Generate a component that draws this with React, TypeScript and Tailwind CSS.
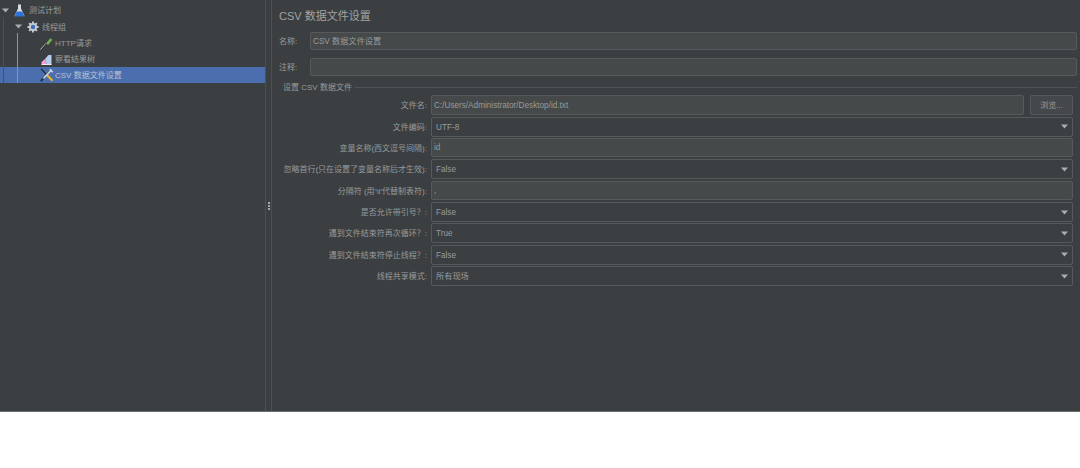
const FONT = "font-['Liberation_Sans','Noto_Sans_CJK_SC',sans-serif]";

function Caret({ className = '' }: { className?: string }) {
  return (
    <svg width="7" height="5" viewBox="0 0 7 5" className={className}>
      <path d="M0 0.5h7L3.5 4.5z" fill="#a9adb0" />
    </svg>
  );
}

function FlaskIcon() {
  return (
    <svg width="11" height="13" viewBox="0 0 11 13">
      <path d="M4 0.5h3v4l3.5 7.5H0.5L4 4.5z" fill="#d5dbe3" />
      <path d="M2.8 7.5h5.4l2.3 5H0.5z" fill="#2f73d8" />
    </svg>
  );
}

function GearIcon() {
  return (
    <svg width="12" height="12" viewBox="0 0 13 13">
      <g stroke="#c7ccd3" strokeWidth="2">
        <path d="M6.5 0.5v12M0.5 6.5h12M2.3 2.3l8.4 8.4M10.7 2.3l-8.4 8.4" />
      </g>
      <circle cx="6.5" cy="6.5" r="4.3" fill="#c7ccd3" />
      <circle cx="6.5" cy="6.5" r="2.4" fill="#3f6fb5" />
    </svg>
  );
}

function PipetteIcon() {
  return (
    <svg width="13" height="13" viewBox="0 0 13 13">
      <path d="M0.5 12.5L6 6.5" stroke="#cfd1d3" strokeWidth="1" />
      <path d="M1.5 12.5L7 6.5" stroke="#26292b" strokeWidth="1" />
      <path d="M6 6.5L10.2 1.2l2.3 1.6-4.4 5.2z" fill="#6fae55" />
    </svg>
  );
}

function ChartIcon() {
  return (
    <svg width="11" height="11" viewBox="0 0 11 11">
      <path d="M0.5 10.5V8L4 5l2 5.5z" fill="#f2a3dc" />
      <path d="M4 5l3.5-4L10.5 1v9.5H6z" fill="#b7cdf0" />
      <path d="M0.5 10.5h10" stroke="#f1e6f2" strokeWidth="1" />
    </svg>
  );
}

function ToolsIcon() {
  return (
    <svg width="14" height="14" viewBox="0 0 14 14">
      <path d="M1 0.8L6.5 6.5" stroke="#2a2d30" strokeWidth="1.3" />
      <path d="M6.5 6.5L12.5 12.8" stroke="#e3b32a" strokeWidth="2.2" />
      <path d="M11.5 2L2.5 11.5" stroke="#d4d6da" strokeWidth="1.4" />
      <path d="M9.8 1.2l3 3" stroke="#d4d6da" strokeWidth="1.6" />
      <path d="M0.8 13.2l2.6-2.8" stroke="#2a2d30" strokeWidth="1.8" />
    </svg>
  );
}

function TextInput({ value, className = '' }: { value?: string; className?: string }) {
  return (
    <div className={`flex items-center min-w-0 border border-[#565a5c] rounded-[2px] bg-[#45494a] pl-[2px] pt-[2px] text-[8.2px] text-[#979b9d] ${className}`}>
      {value}
    </div>
  );
}

function SelectBox({ value }: { value: string }) {
  return (
    <div className="flex flex-1 h-[20px] items-center justify-between border border-[#565a5c] rounded-[2px] bg-[#3c3f41] pl-[4px] pr-[4px] text-[8.2px] text-[#979b9d]">
      <span className="pt-[2px]">{value}</span>
      <Caret />
    </div>
  );
}

const rows: { label: string; value: string; kind: 'input' | 'select' | 'file' }[] = [
  { label: '文件名:', value: 'C:/Users/Administrator/Desktop/id.txt', kind: 'file' },
  { label: '文件编码:', value: 'UTF-8', kind: 'select' },
  { label: '变量名称(西文逗号间隔):', value: 'id', kind: 'input' },
  { label: '忽略首行(只在设置了变量名称后才生效):', value: 'False', kind: 'select' },
  { label: '分隔符 (用\'\\t\'代替制表符):', value: ',', kind: 'input' },
  { label: '是否允许带引号？:', value: 'False', kind: 'select' },
  { label: '遇到文件结束符再次循环？:', value: 'True', kind: 'select' },
  { label: '遇到文件结束符停止线程？:', value: 'False', kind: 'select' },
  { label: '线程共享模式:', value: '所有现场', kind: 'select' },
];

export default function App() {
  return (
    <div className={`w-[1080px] h-[468px] bg-white overflow-hidden ${FONT}`}>
      <div className="flex h-[412px] bg-[#3c3f41] border-b border-[#6b6f71]">
        {/* Tree */}
        <div className="relative w-[265px] shrink-0 pt-[2px] text-[8px] text-[#979b9d]">
          <div className="flex items-center h-[16px] pl-[2px] gap-[5px]">
            <Caret />
            <FlaskIcon />
            <span className="ml-[-1px] pt-[2px]">测试计划</span>
          </div>
          <div className="flex items-center h-[17px] pl-[15px] gap-[3px]">
            <Caret />
            <span className="ml-[2px]"><GearIcon /></span>
            <span className="pt-[2px]">线程组</span>
          </div>
          <div className="flex flex-col pl-[40px]">
            <div className="flex items-center h-[16px] gap-[2px]">
              <PipetteIcon />
              <span className="pt-[2px]">HTTP请求</span>
            </div>
            <div className="flex items-center h-[16px] gap-[3px]">
              <span className="ml-[1px]"><ChartIcon /></span>
              <span className="pt-[2px]">察看结果树</span>
            </div>
          </div>
          <div className="flex items-center h-[16px] pl-[40px] gap-[1px] bg-[#4b6eaf] text-[#bcc3cf]">
            <ToolsIcon />
            <span className="pt-[2px]">CSV 数据文件设置</span>
          </div>
          {/* tree guide lines */}
          <div className="absolute left-[3px] top-[17px] h-[66px] w-px bg-[#4d5153]" />
          <div className="absolute left-[17px] top-[33px] h-[50px] w-px bg-[#5f9fe0]" />
        </div>

        {/* Splitter */}
        <div className="flex w-[7px] shrink-0 items-center justify-center border-x border-[#4c5052]">
          <div className="flex flex-col gap-[1px]">
            <div className="w-[2px] h-[2px] bg-[#a4a7a9]" />
            <div className="w-[2px] h-[2px] bg-[#a4a7a9]" />
            <div className="w-[2px] h-[2px] bg-[#a4a7a9]" />
          </div>
        </div>

        {/* Settings */}
        <div className="flex-1 min-w-0 pl-[7px] pr-[3px] pt-[9px] text-[8px] text-[#979b9d]">
          <div className="text-[11px] leading-[15px] text-[#a0a4a6]">CSV 数据文件设置</div>
          <div className="flex items-center mt-[8px] h-[18px]">
            <span className="w-[31px] shrink-0 pt-[1px]">名称:</span>
            <TextInput value="CSV 数据文件设置" className="flex-1 h-full" />
          </div>
          <div className="flex items-center mt-[8px] h-[18px]">
            <span className="w-[31px] shrink-0 pt-[2px]">注释:</span>
            <TextInput className="flex-1 h-full" />
          </div>

          <div className="flex items-center mt-[5px] h-[12px]">
            <span className="ml-[4px] mr-[3px] shrink-0 pt-[1px]">设置 CSV 数据文件</span>
            <div className="flex-1 h-px bg-[#4f5355]" />
          </div>

          <div className="flex flex-col gap-[1.33px] mt-[2.4px] pr-[4px]">
            {rows.map((row) => (
              <div key={row.label} className="flex items-center h-[20px]">
                <span className="w-[148px] shrink-0 pt-[2px] text-right whitespace-nowrap">{row.label}</span>
                <div className="flex flex-1 min-w-0 ml-[4px] h-full gap-[6px]">
                  {row.kind === 'select' && <SelectBox value={row.value} />}
                  {row.kind === 'input' && <TextInput value={row.value} className="flex-1 h-[19px]" />}
                  {row.kind === 'file' && (
                    <>
                      <TextInput value={row.value} className="flex-1 h-full" />
                      <div className="flex w-[43px] h-full shrink-0 items-center justify-center border border-[#565a5c] rounded-[2px] bg-[#44484a] pt-[1px]">
                        浏览...
                      </div>
                    </>
                  )}
                </div>
              </div>
            ))}
          </div>
        </div>
      </div>
    </div>
  );
}
